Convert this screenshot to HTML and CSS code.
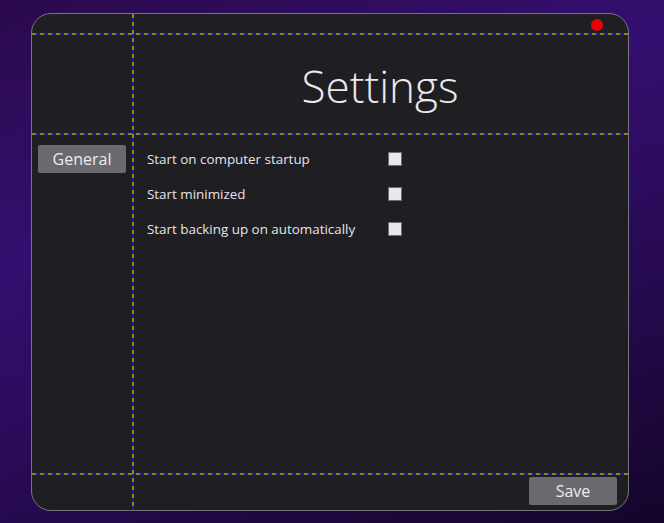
FILE: index.html
```html
<!DOCTYPE html>
<html>
<head>
<meta charset="utf-8">
<link rel="stylesheet" href="styles.css">
</head>
<body>
<div class="window">
  <div class="cell top-left"></div>
  <div class="cell top-right"></div>
  <div class="cell header-left"></div>
  <div class="cell header">
    <h1 class="title">Settings</h1>
  </div>
  <div class="cell nav">
    <button class="btn">General</button>
  </div>
  <div class="cell options">
    <div class="option"><span class="label">Start on computer startup</span><span class="check"></span></div>
    <div class="option"><span class="label">Start minimized</span><span class="check"></span></div>
    <div class="option"><span class="label">Start backing up on automatically</span><span class="check"></span></div>
  </div>
  <div class="cell footer-left"></div>
  <div class="cell footer">
    <button class="btn">Save</button>
  </div>
  <span class="line h h1"></span>
  <span class="line h h2"></span>
  <span class="line h h3"></span>
  <span class="line v v1"></span>
  <span class="dot"></span>
</div>
</body>
</html>
```

FILE: styles.css
```css
html, body {
  margin: 0;
  padding: 0;
  height: 100%;
}
body {
  background: linear-gradient(160deg, #2a0a4c 0%, #330f70 35%, #2a0b58 60%, #14052a 100%);
  font-family: "Open Sans", "Noto Sans", sans-serif;
  overflow: hidden;
}
.window {
  position: relative;
  box-sizing: border-box;
  margin: 13px 0 0 31px;
  width: 598px;
  height: 498px;
  border: 1px solid #77747b;
  border-radius: 20px;
  background: #1f1e22;
  display: grid;
  grid-template-columns: 100px 1fr;
  grid-template-rows: 19px 100px 1fr 37px;
}
.header {
  display: flex;
  align-items: center;
  justify-content: center;
}
.title {
  margin: 0;
  font-weight: 300;
  font-size: 44px;
  color: #eae8ee;
  line-height: 1;
  padding-top: 6px;
}
.nav {
  padding: 12px 0 0 6px;
}
.btn {
  width: 88px;
  height: 28px;
  border: none;
  border-radius: 2px;
  background: #6a696e;
  color: #eeecf0;
  font-family: "Open Sans", "Noto Sans", sans-serif;
  font-size: 16px;
  font-weight: 400;
  padding: 0;
  line-height: 28px;
}
.options {
  padding: 8px 0 0 15px;
  display: flex;
  flex-direction: column;
}
.option {
  height: 35px;
  display: flex;
  align-items: center;
}
.label {
  width: 241px;
  color: #e6e4ea;
  font-size: 13.4px;
}
.check {
  box-sizing: border-box;
  width: 14px;
  height: 14px;
  background: #e9e7ed;
  border: 1px solid #6e6d73;
}
.footer {
  display: flex;
  justify-content: flex-end;
  padding: 4px 11px 0 0;
}
.line {
  position: absolute;
}
.h {
  left: 0;
  right: 0;
  height: 2px;
  background: repeating-linear-gradient(90deg, #8a861e 0 4px, #1c1c9c 4px 8px);
}
.h1 { top: 19px; }
.h2 { top: 119px; }
.h3 { top: 459px; }
.v {
  top: 0;
  bottom: 0;
  width: 2px;
  background: repeating-linear-gradient(180deg, #8a861e 0 4px, #1c1c9c 4px 8px);
}
.v1 { left: 100px; }
.dot {
  position: absolute;
  left: 559px;
  top: 5px;
  width: 12px;
  height: 12px;
  border-radius: 50%;
  background: #ec0008;
}
```
